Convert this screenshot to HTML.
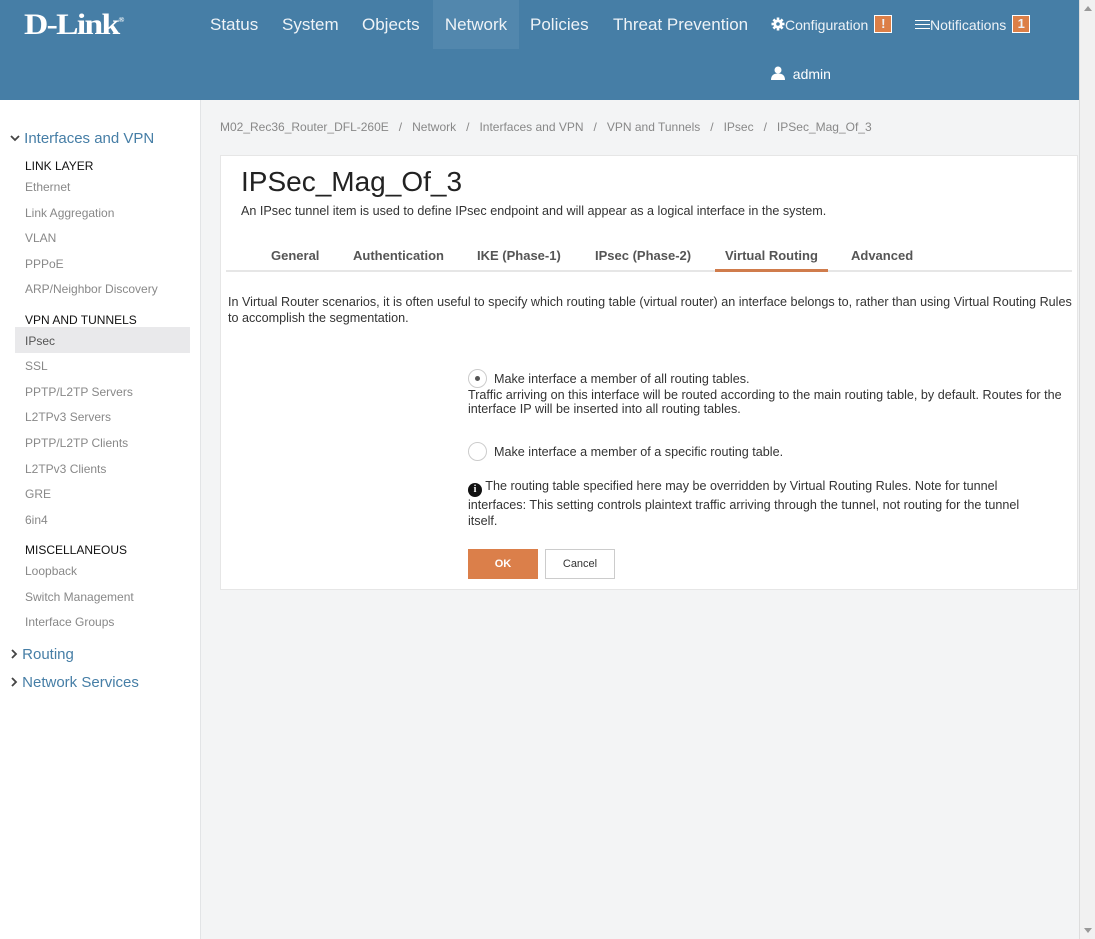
<!DOCTYPE html>
<html><head><meta charset="utf-8"><style>
*{box-sizing:border-box;margin:0;padding:0}
body{width:1095px;height:939px;overflow:hidden;font-family:"Liberation Sans",sans-serif;background:#f3f4f5;position:relative}
.hdr{position:absolute;left:0;top:0;width:1079px;height:100px;background:#467ea6;color:#fff}
.logo{position:absolute;left:24px;top:8px;font-family:"Liberation Serif",serif;font-weight:bold;font-size:30px;letter-spacing:-1.5px;transform:scaleX(1.12);transform-origin:left}
.nav{position:absolute;top:0;height:49px;line-height:50px;font-size:17px;color:#eef3f7}
.act{background:#5287ad}
.badge{display:inline-block;background:#dc7f47;border:1px solid #fff;width:18px;height:18px;line-height:16px;text-align:center;font-size:13px;font-weight:bold;vertical-align:2px;margin-left:6px}
.sb{position:absolute;left:0;top:100px;width:201px;height:839px;background:#fff;border-right:1px solid #e2e4e6}
.scroll{position:absolute;left:1079px;top:0;width:16px;height:939px;background:#f1f1f1;border-left:1px solid #ddd}
.sec{position:absolute;left:10px;font-size:15px;color:#467ea6}
.hd{position:absolute;left:25px;font-size:12px;color:#111}
.it{position:absolute;left:25px;font-size:12px;color:#888}
.bc{position:absolute;top:120px;left:220px;font-size:12px;color:#888}
.card{position:absolute;left:220px;top:155px;width:858px;height:435px;background:#fff;border:1px solid #e6e6e6}
.tab{position:absolute;top:248px;font-size:13px;font-weight:bold;color:#555}
.t{position:absolute;font-size:12.6px;color:#333;line-height:16px}
.radio{position:absolute;left:468px;width:19px;height:19px;border:1px solid #ccc;border-radius:50%}
</style></head><body>
<div class="hdr">
<div class="logo">D-Link<span style="font-size:7px;vertical-align:12px">®</span></div>
<div class="nav" style="left:210px">Status</div>
<div class="nav" style="left:282px">System</div>
<div class="nav" style="left:362px">Objects</div>
<div class="nav act" style="left:433px;width:86px;text-align:center">Network</div>
<div class="nav" style="left:530px">Policies</div>
<div class="nav" style="left:613px">Threat Prevention</div>
<div class="nav" style="left:771px;font-size:14px"><svg width="14" height="14" viewBox="0 0 14 14" style="vertical-align:-1px"><g fill="#fff"><circle cx="7" cy="7" r="4.5"/><rect x="5.7" y="0.5" width="2.6" height="13"/><rect x="0.5" y="5.7" width="13" height="2.6"/><rect x="5.7" y="0.5" width="2.6" height="13" transform="rotate(45 7 7)"/><rect x="5.7" y="0.5" width="2.6" height="13" transform="rotate(-45 7 7)"/></g><circle cx="7" cy="7" r="1.8" fill="#467ea6"/></svg>Configuration<span class="badge">!</span></div>
<div class="nav" style="left:915px;font-size:14px"><span style="display:inline-block;width:15px;height:9px;border-top:1px solid #fff;border-bottom:1px solid #fff;position:relative;vertical-align:1px"><i style="position:absolute;left:0;right:0;top:3px;border-top:1px solid #fff"></i></span>Notifications<span class="badge">1</span></div>
<div style="position:absolute;left:771px;top:66px;font-size:14px"><svg width="14" height="14" viewBox="0 0 14 14" style="vertical-align:-1px"><circle cx="7" cy="4" r="3.5" fill="#fff"/><path d="M0 14 Q0 7.5 7 7.5 Q14 7.5 14 14Z" fill="#fff"/></svg> &nbsp;admin</div>
</div>
<div class="scroll"><div style="position:absolute;left:4px;top:6px;border:4px solid transparent;border-bottom:5px solid #999;border-top:0"></div><div style="position:absolute;left:4px;bottom:6px;border:4px solid transparent;border-top:5px solid #999;border-bottom:0"></div></div>
<div class="sb">
<div class="sec" style="top:30px"><svg width="10" height="8" viewBox="0 0 10 8" style="vertical-align:1px"><path d="M1 2 L5 6 L9 2" stroke="#444" stroke-width="1.8" fill="none"/></svg> Interfaces and VPN</div>
<div class="hd" style="top:59px">LINK LAYER</div>
<div class="it" style="top:80px">Ethernet</div>
<div class="it" style="top:106px">Link Aggregation</div>
<div class="it" style="top:131px">VLAN</div>
<div class="it" style="top:157px">PPPoE</div>
<div class="it" style="top:182px">ARP/Neighbor Discovery</div>
<div class="hd" style="top:213px">VPN AND TUNNELS</div>
<div style="position:absolute;left:15px;top:227px;width:175px;height:26px;background:#e9e9eb"></div>
<div class="it" style="top:234px;color:#555">IPsec</div>
<div class="it" style="top:259px">SSL</div>
<div class="it" style="top:285px">PPTP/L2TP Servers</div>
<div class="it" style="top:310px">L2TPv3 Servers</div>
<div class="it" style="top:336px">PPTP/L2TP Clients</div>
<div class="it" style="top:362px">L2TPv3 Clients</div>
<div class="it" style="top:387px">GRE</div>
<div class="it" style="top:413px">6in4</div>
<div class="hd" style="top:443px">MISCELLANEOUS</div>
<div class="it" style="top:464px">Loopback</div>
<div class="it" style="top:490px">Switch Management</div>
<div class="it" style="top:515px">Interface Groups</div>
<div class="sec" style="top:546px"><svg width="8" height="10" viewBox="0 0 8 10" style="vertical-align:0"><path d="M2 1 L6 5 L2 9" stroke="#444" stroke-width="1.8" fill="none"/></svg> Routing</div>
<div class="sec" style="top:574px"><svg width="8" height="10" viewBox="0 0 8 10" style="vertical-align:0"><path d="M2 1 L6 5 L2 9" stroke="#444" stroke-width="1.8" fill="none"/></svg> Network Services</div>
</div>
<div class="bc">M02_Rec36_Router_DFL-260E &nbsp;&nbsp;/&nbsp;&nbsp; Network &nbsp;&nbsp;/&nbsp;&nbsp; Interfaces and VPN &nbsp;&nbsp;/&nbsp;&nbsp; VPN and Tunnels &nbsp;&nbsp;/&nbsp;&nbsp; IPsec &nbsp;&nbsp;/&nbsp;&nbsp; IPSec_Mag_Of_3</div>
<div class="card"></div>
<div style="position:absolute;left:241px;top:166px;font-size:28px;color:#222">IPSec_Mag_Of_3</div>
<div class="t" style="left:241px;top:203px">An IPsec tunnel item is used to define IPsec endpoint and will appear as a logical interface in the system.</div>
<div style="position:absolute;left:226px;top:270px;width:846px;height:2px;background:#e6e6e6"></div>
<div class="tab" style="left:271px">General</div>
<div class="tab" style="left:353px">Authentication</div>
<div class="tab" style="left:477px">IKE (Phase-1)</div>
<div class="tab" style="left:595px">IPsec (Phase-2)</div>
<div class="tab" style="left:725px">Virtual Routing</div>
<div style="position:absolute;left:715px;top:269px;width:113px;height:3px;background:#d07c4c"></div>
<div class="tab" style="left:851px">Advanced</div>
<div class="t" style="left:228px;top:294px;width:845px">In Virtual Router scenarios, it is often useful to specify which routing table (virtual router) an interface belongs to, rather than using Virtual Routing Rules to accomplish the segmentation.</div>
<div class="radio" style="top:369px"><div style="width:5px;height:5px;background:#555;border-radius:50%;margin:6px"></div></div>
<div class="t" style="left:494px;top:371px">Make interface a member of all routing tables.</div>
<div class="t" style="left:468px;top:388px;width:600px;line-height:14px">Traffic arriving on this interface will be routed according to the main routing table, by default. Routes for the interface IP will be inserted into all routing tables.</div>
<div class="radio" style="top:442px"></div>
<div class="t" style="left:494px;top:444px">Make interface a member of a specific routing table.</div>
<div class="t" style="left:468px;top:478px;width:580px;line-height:16px"><span style="display:inline-block;width:14px;height:14px;border-radius:50%;background:#111;color:#fff;font-size:10px;font-weight:bold;text-align:center;line-height:14px;vertical-align:-2px;font-family:'Liberation Serif',serif">i</span> The routing table specified here may be overridden by Virtual Routing Rules. Note for tunnel interfaces: This setting controls plaintext traffic arriving through the tunnel, not routing for the tunnel itself.</div>
<div style="position:absolute;left:468px;top:549px;width:70px;height:30px;background:#db7f4a;color:#fff;font-size:11px;font-weight:bold;text-align:center;line-height:30px">OK</div>
<div style="position:absolute;left:545px;top:549px;width:70px;height:30px;background:#fff;border:1px solid #ccc;color:#333;font-size:11px;text-align:center;line-height:28px">Cancel</div>
</body></html>
